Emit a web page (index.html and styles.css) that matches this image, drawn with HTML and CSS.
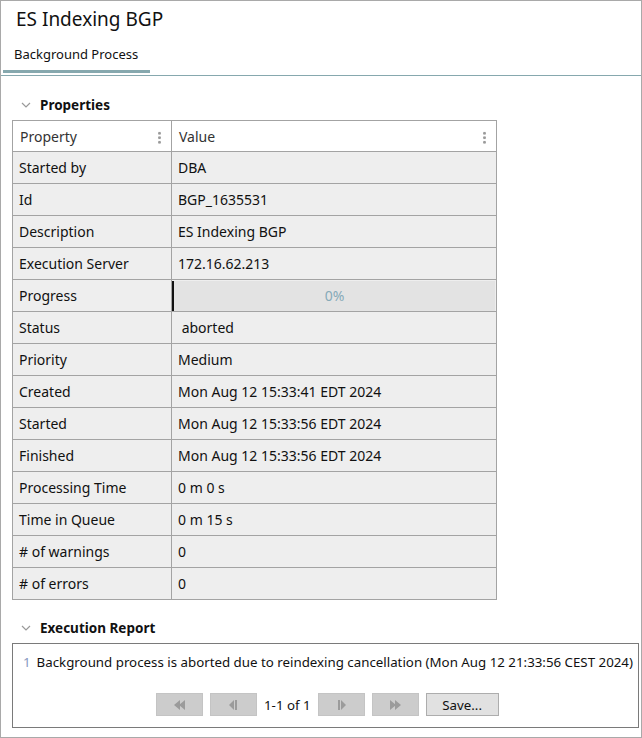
FILE: index.html
```html
<!DOCTYPE html>
<html lang="en">
<head>
    <meta charset="UTF-8">
    <title>ES Indexing BGP</title>
    <link rel="stylesheet" href="styles.css">
</head>
<body>
    <div class="window">
        <h1 class="title">ES Indexing BGP</h1>

        <!-- Tabs -->
        <div class="tabs">
            <div class="tab active">Background Process</div>
        </div>

        <!-- Properties -->
        <div class="section-head">
            <svg class="chevron" width="10" height="6" viewBox="0 0 10 6"><path d="M1 1l4 4 4-4" fill="none" stroke="#9a9a9a" stroke-width="1.2"/></svg>
            <span>Properties</span>
        </div>

        <table class="props">
            <thead>
                <tr>
                    <th class="col-prop">Property<span class="kebab"></span></th>
                    <th>Value<span class="kebab"></span></th>
                </tr>
            </thead>
            <tbody>
                <tr><td>Started by</td><td>DBA</td></tr>
                <tr><td>Id</td><td>BGP_1635531</td></tr>
                <tr><td>Description</td><td>ES Indexing BGP</td></tr>
                <tr><td>Execution Server</td><td>172.16.62.213</td></tr>
                <tr><td>Progress</td><td class="progress-cell"><div class="progress">0%</div></td></tr>
                <tr><td>Status</td><td>&nbsp;aborted</td></tr>
                <tr><td>Priority</td><td>Medium</td></tr>
                <tr><td>Created</td><td>Mon Aug 12 15:33:41 EDT 2024</td></tr>
                <tr><td>Started</td><td>Mon Aug 12 15:33:56 EDT 2024</td></tr>
                <tr><td>Finished</td><td>Mon Aug 12 15:33:56 EDT 2024</td></tr>
                <tr><td>Processing Time</td><td>0 m 0 s</td></tr>
                <tr><td>Time in Queue</td><td>0 m 15 s</td></tr>
                <tr><td># of warnings</td><td>0</td></tr>
                <tr><td># of errors</td><td>0</td></tr>
            </tbody>
        </table>

        <!-- Execution Report -->
        <div class="section-head report-head">
            <svg class="chevron" width="10" height="6" viewBox="0 0 10 6"><path d="M1 1l4 4 4-4" fill="none" stroke="#9a9a9a" stroke-width="1.2"/></svg>
            <span>Execution Report</span>
        </div>

        <div class="report">
            <div class="report-line">
                <span class="line-no">1</span>
                <span>Background process is aborted due to reindexing cancellation (Mon Aug 12 21:33:56 CEST 2024)</span>
            </div>
            <div class="pager">
                <button class="pg-btn" disabled>
                    <svg width="12" height="10" viewBox="0 0 12 10"><path d="M6 0L0 5l6 5z M11 0L5 5l6 5z" fill="#9b9b9b"/></svg>
                </button>
                <button class="pg-btn" disabled>
                    <svg width="12" height="10" viewBox="0 0 12 10"><path d="M6 0L1 5l5 5z" fill="#9b9b9b"/><rect x="7" y="0" width="2" height="10" fill="#9b9b9b"/></svg>
                </button>
                <span class="pg-count">1-1 of 1</span>
                <button class="pg-btn" disabled>
                    <svg width="12" height="10" viewBox="0 0 12 10"><rect x="3" y="0" width="2" height="10" fill="#9b9b9b"/><path d="M6 0l5 5-5 5z" fill="#9b9b9b"/></svg>
                </button>
                <button class="pg-btn" disabled>
                    <svg width="12" height="10" viewBox="0 0 12 10"><path d="M1 0l6 5-6 5z M6 0l6 5-6 5z" fill="#9b9b9b"/></svg>
                </button>
                <button class="save-btn">Save...</button>
            </div>
        </div>
    </div>
</body>
</html>
```

FILE: styles.css
```css
* {
    margin: 0;
    padding: 0;
    box-sizing: border-box;
}

:root {
    --text: #111;
    --grid: #a3a3a3;
    --row-bg: #eeeeee;
    --accent: #86a8ae;
}

body {
    font-family: "Noto Sans", "Open Sans", sans-serif;
    font-size: 13px;
    color: var(--text);
    background: #fff;
}

.window {
    width: 642px;
    height: 738px;
    border: 1px solid #a9a9a9;
    overflow: hidden;
}

.title {
    font-size: 19px;
    font-weight: normal;
    padding: 5px 0 0 15px;
    height: 36px;
    line-height: 26px;
}

/* Tabs */
.tabs {
    display: flex;
    margin-top: 5px;
    border-bottom: 1px solid var(--accent);
    height: 34px;
}

.tab {
    width: 147px;
    margin-left: 2px;
    padding-left: 11px;
    line-height: 24px;
    border-bottom: 3px solid var(--accent);
    height: 31px;
    color: #111;
}

/* Section heads */
.section-head {
    display: flex;
    align-items: center;
    gap: 9px;
    padding-left: 20px;
    margin-top: 18px;
    height: 22px;
    font-weight: bold;
    font-size: 13.5px;
}

.report-head {
    margin-top: 17px;
}

/* Properties table */
.props {
    margin: 4px 0 0 11px;
    width: 485px;
    border-collapse: collapse;
    table-layout: fixed;
    font-size: 14px;
}

.props th,
.props td {
    border: 1px solid var(--grid);
    height: 32px;
    padding: 0 6px;
    text-align: left;
    font-weight: normal;
    white-space: nowrap;
}

.props th {
    height: 31px;
    background: #fff;
    color: #333;
    position: relative;
    padding-left: 7px;
}

.props td {
    background: var(--row-bg);
}

.col-prop {
    width: 159px;
}

.kebab {
    position: absolute;
    right: 10px;
    top: 10px;
    width: 3px;
    height: 13px;
    background: radial-gradient(circle, #9a9a9a 1.2px, transparent 1.6px) 0 0 / 3px 4.5px repeat-y;
}

.progress-cell {
    padding: 0 !important;
}

.progress {
    height: 30px;
    margin: 0 1px 0 0;
    border-left: 2px solid #111;
    background: #e3e3e3;
    color: #86aab8;
    text-align: center;
    line-height: 30px;
}

/* Execution report */
.report {
    margin: 4px 2px 0 11px;
    height: 85px;
    border: 1px solid #7a7a7a;
    padding: 8px 0 0 10px;
    font-size: 13.3px;
}

.report-line {
    display: flex;
    gap: 6px;
    white-space: nowrap;
    line-height: 21px;
}

.line-no {
    color: #8898c0;
}

.pager {
    display: flex;
    align-items: center;
    gap: 7px;
    margin: 20px 0 0 133px;
}

.pg-btn {
    width: 47px;
    height: 23px;
    border: 1px solid #c4c4c4;
    background: #cccccc;
    display: flex;
    align-items: center;
    justify-content: center;
}

.pg-count {
    font-size: 13.3px;
}

.save-btn {
    width: 73px;
    height: 23px;
    border: 1px solid #adadad;
    background: #e1e1e1;
    font-family: inherit;
    font-size: 13.3px;
    color: #111;
}
```
